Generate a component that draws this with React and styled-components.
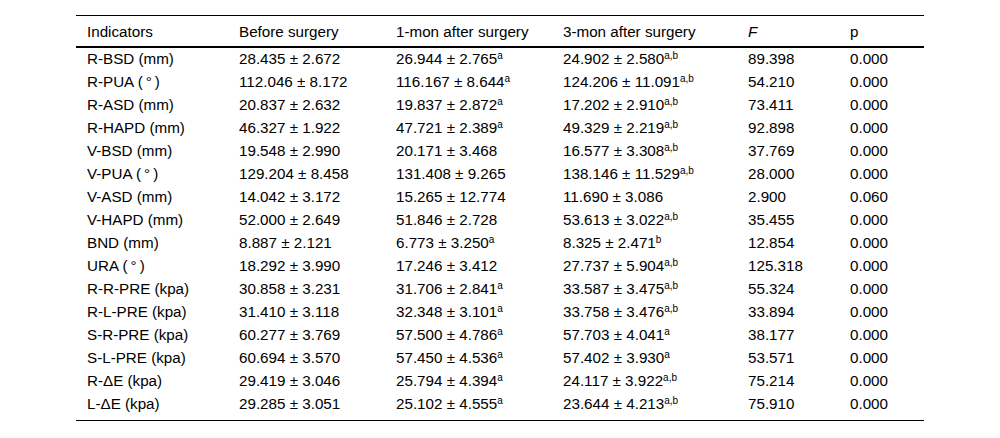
import React from "react";
import styled, { createGlobalStyle } from "styled-components";

const Global = createGlobalStyle`
  html, body { margin: 0; padding: 0; background: #fff; }
  body { font-family: "Liberation Sans", Arial, sans-serif; color: #000; }
`;

const Page = styled.div`
  padding: 15px 76px 0 76px;
`;

const Table = styled.table`
  width: 848px;
  border-collapse: collapse;
  font-size: 15.2px;
  line-height: 1;
  border-top: 1px solid #000;
  border-bottom: 1px solid #000;
`;

const HeadCell = styled.th`
  text-align: left;
  font-weight: normal;
  font-style: ${(p) => (p.$italic ? "italic" : "normal")};
  height: 31px;
  padding: 1px 0 0 11px;
  vertical-align: middle;
  border-bottom: 2px solid #000;
  width: ${(p) => p.$w}px;
  box-sizing: border-box;
`;

const Cell = styled.td`
  text-align: left;
  height: 23px;
  padding: 0 0 0 11px;
  vertical-align: middle;
  white-space: nowrap;
`;

const Spacer = styled.td`
  height: 4px;
  padding: 0;
`;

const Sup = styled.sup`
  font-size: 10px;
  line-height: 0;
  vertical-align: 5px;
`;

const cols = [
  { label: "Indicators", w: 152 },
  { label: "Before surgery", w: 157 },
  { label: "1-mon after surgery", w: 167 },
  { label: "3-mon after surgery", w: 185 },
  { label: "F", w: 102, italic: true },
  { label: "p", w: 85 },
];

const deg = "(\u2009°\u2009)";

const rows = [
  ["R-BSD (mm)", "28.435 ± 2.672", ["26.944 ± 2.765", "a"], ["24.902 ± 2.580", "a,b"], "89.398", "0.000"],
  [`R-PUA ${deg}`, "112.046 ± 8.172", ["116.167 ± 8.644", "a"], ["124.206 ± 11.091", "a,b"], "54.210", "0.000"],
  ["R-ASD (mm)", "20.837 ± 2.632", ["19.837 ± 2.872", "a"], ["17.202 ± 2.910", "a,b"], "73.411", "0.000"],
  ["R-HAPD (mm)", "46.327 ± 1.922", ["47.721 ± 2.389", "a"], ["49.329 ± 2.219", "a,b"], "92.898", "0.000"],
  ["V-BSD (mm)", "19.548 ± 2.990", ["20.171 ± 3.468", ""], ["16.577 ± 3.308", "a,b"], "37.769", "0.000"],
  [`V-PUA ${deg}`, "129.204 ± 8.458", ["131.408 ± 9.265", ""], ["138.146 ± 11.529", "a,b"], "28.000", "0.000"],
  ["V-ASD (mm)", "14.042 ± 3.172", ["15.265 ± 12.774", ""], ["11.690 ± 3.086", ""], "2.900", "0.060"],
  ["V-HAPD (mm)", "52.000 ± 2.649", ["51.846 ± 2.728", ""], ["53.613 ± 3.022", "a,b"], "35.455", "0.000"],
  ["BND (mm)", "8.887 ± 2.121", ["6.773 ± 3.250", "a"], ["8.325 ± 2.471", "b"], "12.854", "0.000"],
  [`URA ${deg}`, "18.292 ± 3.990", ["17.246 ± 3.412", ""], ["27.737 ± 5.904", "a,b"], "125.318", "0.000"],
  ["R-R-PRE (kpa)", "30.858 ± 3.231", ["31.706 ± 2.841", "a"], ["33.587 ± 3.475", "a,b"], "55.324", "0.000"],
  ["R-L-PRE (kpa)", "31.410 ± 3.118", ["32.348 ± 3.101", "a"], ["33.758 ± 3.476", "a,b"], "33.894", "0.000"],
  ["S-R-PRE (kpa)", "60.277 ± 3.769", ["57.500 ± 4.786", "a"], ["57.703 ± 4.041", "a"], "38.177", "0.000"],
  ["S-L-PRE (kpa)", "60.694 ± 3.570", ["57.450 ± 4.536", "a"], ["57.402 ± 3.930", "a"], "53.571", "0.000"],
  ["R-ΔE (kpa)", "29.419 ± 3.046", ["25.794 ± 4.394", "a"], ["24.117 ± 3.922", "a,b"], "75.214", "0.000"],
  ["L-ΔE (kpa)", "29.285 ± 3.051", ["25.102 ± 4.555", "a"], ["23.644 ± 4.213", "a,b"], "75.910", "0.000"],
];

const Value = ({ v }) =>
  Array.isArray(v) ? (
    <>
      {v[0]}
      {v[1] && <Sup>{v[1]}</Sup>}
    </>
  ) : (
    v
  );

export default function App() {
  return (
    <>
      <Global />
      <Page>
        <Table>
          <thead>
            <tr>
              {cols.map((c) => (
                <HeadCell key={c.label} $w={c.w} $italic={c.italic}>
                  {c.label}
                </HeadCell>
              ))}
            </tr>
          </thead>
          <tbody>
            {rows.map((r) => (
              <tr key={r[0]}>
                {r.map((v, i) => (
                  <Cell key={i}>
                    <Value v={v} />
                  </Cell>
                ))}
              </tr>
            ))}
            <tr>
              <Spacer colSpan={6} />
            </tr>
          </tbody>
        </Table>
      </Page>
    </>
  );
}
